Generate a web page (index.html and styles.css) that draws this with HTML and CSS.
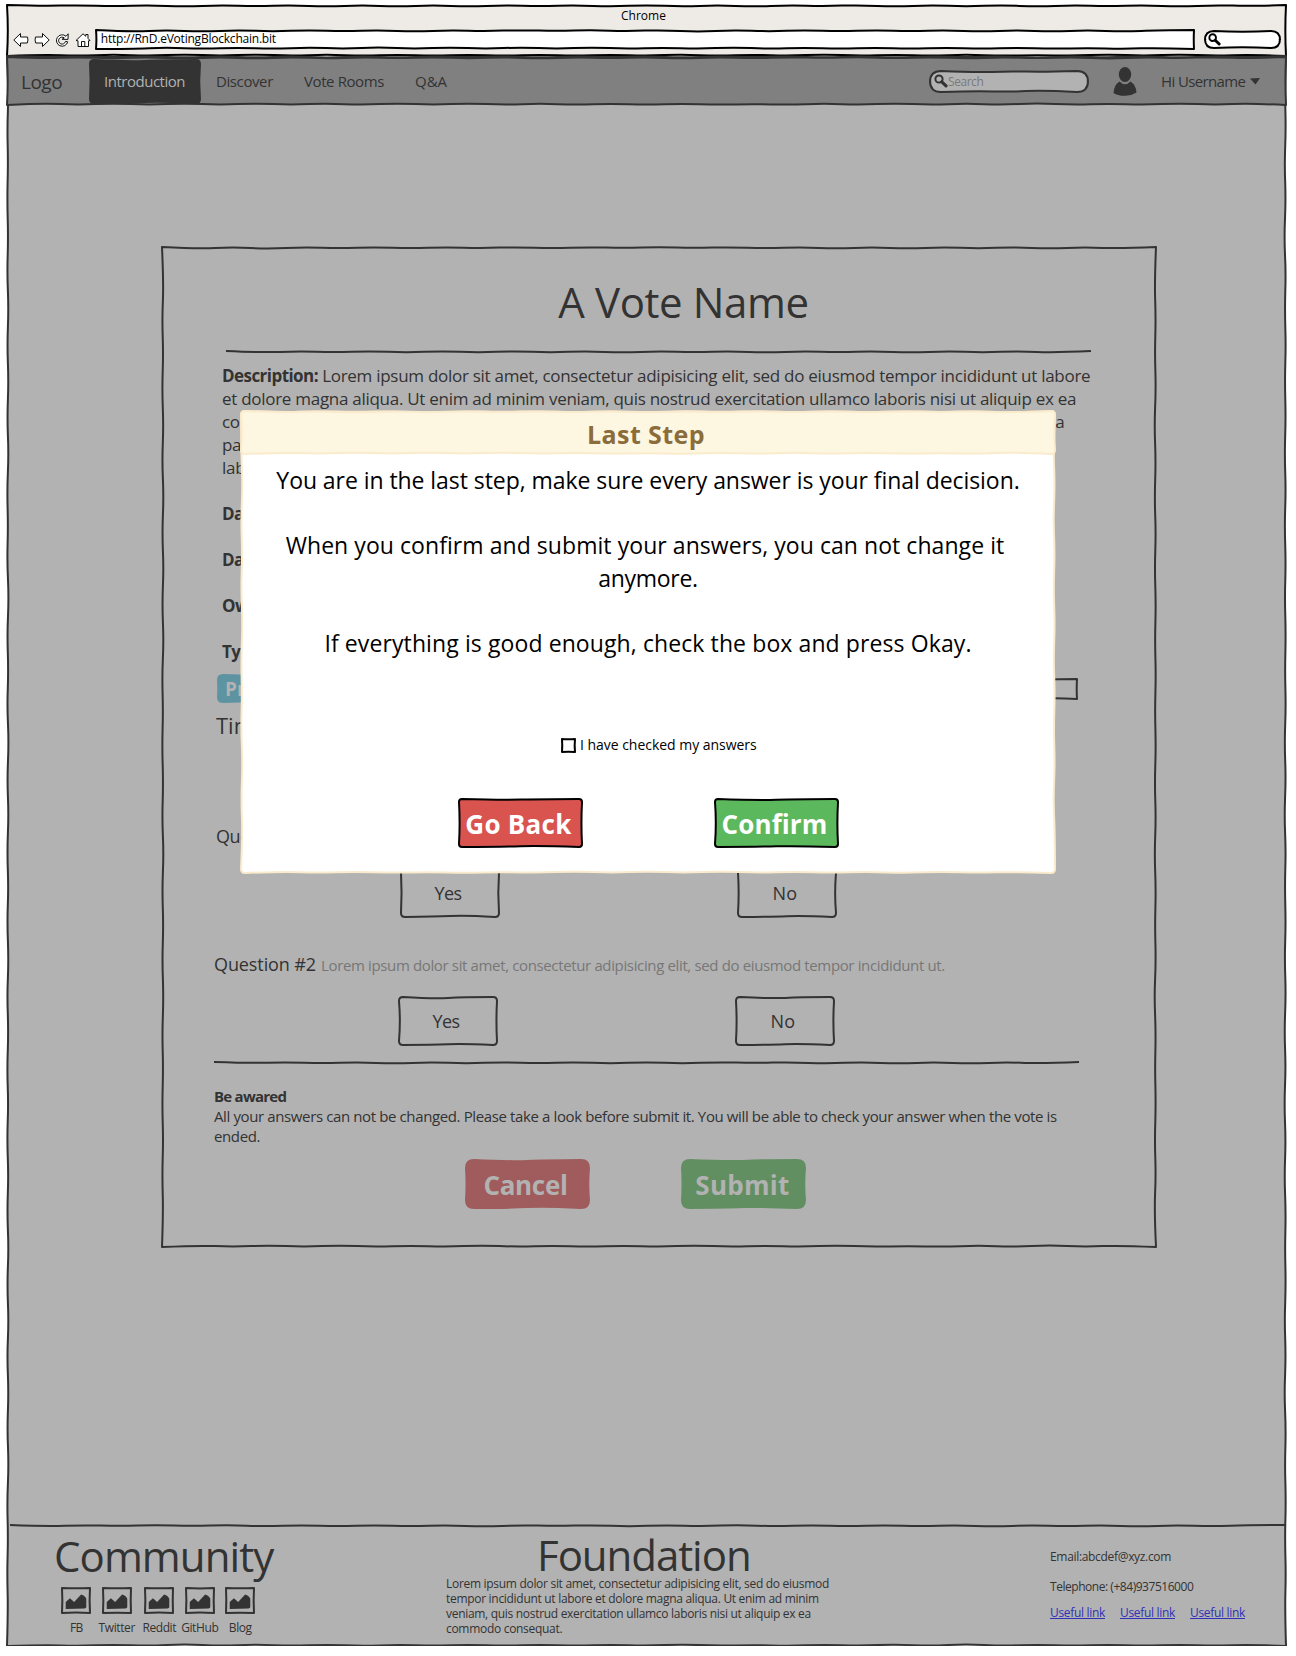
FILE: index.html
```html
<!DOCTYPE html>
<html lang="en">
<head>
<meta charset="utf-8">
<title>Vote - Last Step</title>
<link rel="stylesheet" href="styles.css">
</head>
<body>
<svg class="defs" width="0" height="0" aria-hidden="true">
  <symbol id="lens" viewBox="0 0 14 14"><circle cx="5" cy="5" r="3.6" fill="none" stroke="currentColor" stroke-width="2"/><path d="M7.8 7.8l4.2 4" stroke="currentColor" stroke-width="3.2" stroke-linecap="round"/></symbol>
  <symbol id="picture" viewBox="0 0 30 26"><path d="M4 22V14.5L8.500 10.500 13 14.500 20.500 6.500Q25 8 26 11V20Q26 21.500 24 21.700Z" fill="currentColor"/></symbol>
</svg>
<div class="window">
  <header class="chrome sketch">
    <div class="chrome-title">Chrome</div>
    <div class="toolbar">
      <svg class="tool" viewBox="0 0 16 16"><path d="M.8 8L7.5 1.5V5H14.5Q15.5 8 14.3 11H7.5V14.5Z"/></svg>
      <svg class="tool" viewBox="0 0 16 16"><path d="M15.2 8L8.5 1.5V5H1.5Q.5 8 1.7 11H8.5V14.5Z"/></svg>
      <svg class="tool" viewBox="0 0 16 16"><path d="M12 4.300A5.700 5.700 0 1 0 13.700 9.800L11.500 9.400A3.500 3.500 0 1 1 10.300 5.900L8 7.300 14 7.400 14.200 1.800Z"/></svg>
      <svg class="tool" viewBox="0 0 16 16"><path d="M1 8.500L8 1.800 10.800 4.300V2.500H13V6.400L15 8.500 13.500 8.800V14.500H3V8.800Z"/><path d="M6.500 14V9.500H9.800V14"/></svg>
      <div class="url sketch">http://RnD.eVotingBlockchain.bit</div>
      <div class="mini-search sketch" data-radius="9"><svg class="lens"><use href="#lens"/></svg></div>
    </div>
  </header>

  <div class="page sketch">
    <nav class="navbar sketch">
      <span class="logo">Logo</span>
      <a class="tab active sketch" data-radius="4">Introduction</a>
      <a class="tab discover">Discover</a>
      <a class="tab rooms">Vote Rooms</a>
      <a class="tab qa">Q&amp;A</a>
      <div class="search sketch" data-radius="11"><svg class="lens"><use href="#lens"/></svg><span>Search</span></div>
      <svg class="user" viewBox="0 0 24 29"><ellipse cx="12" cy="7.500" rx="6.200" ry="7.500"/><path d="M6.500 14.500Q12 20 17.500 14.500Q23 18 23.500 25.500Q18 29 12 28.800Q5 29 .5 26Q1 18 6.500 14.500Z"/></svg>
      <span class="hello">Hi Username</span>
      <svg class="caret" viewBox="0 0 10 7"><path d="M0 .5L10 0 5.500 6.500Z"/></svg>
    </nav>

    <main class="content">
      <section class="card sketch">
        <h1 class="vote-name">A Vote Name</h1>
        <div class="rule sketch-line"></div>
        <p class="description"><b>Description:</b><span class="lead"> Lorem ipsum dolor sit amet, consectetur adipisicing elit, sed do eiusmod tempor incididunt ut labore</span><br>et dolore magna aliqua. Ut enim ad minim veniam, quis nostrud exercitation ullamco laboris nisi ut aliquip ex ea<br><span class="duis">commodo consequat. Duis aute irure dolor in reprehenderit in voluptate velit esse cillum dolore eu fugiat nulla</span><br><span class="tight">pariatur. Excepteur sint occaecat cupidatat non proident, sunt in culpa qui officia deserunt mollit anim id est</span><br>laborum.<br><br><b>Date start:</b><br><br><b>Date end:</b><br><br><b>Owner:</b><br><br><b>Type:</b></p>
        <div class="progress-row">
          <span class="badge sketch" data-radius="5">Progress</span>
          <div class="progress sketch"></div>
        </div>
        <div class="time-left">Time left:</div>
        <div class="question first"><span class="label">Question #1</span></div>
        <div class="answers upper"><span class="answer sketch" data-radius="4">Yes</span><span class="answer no sketch" data-radius="4">No</span></div>
        <div class="question"><span class="label">Question #2</span><span class="hint">Lorem ipsum dolor sit amet, consectetur adipisicing elit, sed do eiusmod tempor incididunt ut.</span></div>
        <div class="answers lower"><span class="answer sketch" data-radius="4">Yes</span><span class="answer no sketch" data-radius="4">No</span></div>
        <div class="rule bottom sketch-line"></div>
        <p class="notice"><b>Be awared</b><br>All your answers can not be changed. Please take a look before submit it. You will be able to check your answer when the vote is<br>ended.</p>
        <div class="actions">
          <span class="button cancel sketch" data-radius="8">Cancel</span>
          <span class="button submit sketch" data-radius="8">Submit</span>
        </div>
      </section>
    </main>

    <footer class="footer">
      <div class="rule sketch-line"></div>
      <div class="footer-body">
        <section class="community">
          <h2>Community</h2>
          <div class="socials">
            <div class="social"><span class="thumb sketch"><svg><use href="#picture"/></svg></span><span>FB</span></div>
            <div class="social"><span class="thumb sketch"><svg><use href="#picture"/></svg></span><span>Twitter</span></div>
            <div class="social"><span class="thumb sketch"><svg><use href="#picture"/></svg></span><span>Reddit</span></div>
            <div class="social"><span class="thumb sketch"><svg><use href="#picture"/></svg></span><span>GitHub</span></div>
            <div class="social"><span class="thumb sketch"><svg><use href="#picture"/></svg></span><span>Blog</span></div>
          </div>
        </section>
        <section class="foundation">
          <h2>Foundation</h2>
          <p>Lorem ipsum dolor sit amet, consectetur adipisicing elit, sed do eiusmod<br>tempor incididunt ut labore et dolore magna aliqua. Ut enim ad minim<br>veniam, quis nostrud exercitation ullamco laboris nisi ut aliquip ex ea<br>commodo consequat.</p>
        </section>
        <address class="contact">
          <div class="email">Email:abcdef@xyz.com</div>
          <div class="phone">Telephone: (+84)937516000</div>
          <div class="links"><a>Useful link</a><a>Useful link</a><a>Useful link</a></div>
        </address>
      </div>
    </footer>
  </div>
</div>

<div class="modal sketch" data-radius="4" role="dialog">
  <div class="modal-title sketch" data-radius="4">Last Step</div>
  <div class="modal-body">
    <p class="m1">You are in the last step, make sure every answer is your final decision.</p>
    <p class="m2">When you confirm and submit your answers, you can not change it<br><span class="wrap">anymore.</span></p>
    <p class="m3">If everything is good enough, check the box and press Okay.</p>
  </div>
  <div class="confirm-check"><span class="box sketch"></span><span>I have checked my answers</span></div>
  <div class="modal-actions">
    <span class="button back sketch" data-radius="3">Go Back</span>
    <span class="button confirm sketch" data-radius="3">Confirm</span>
  </div>
</div>
<script src="sketch.js"></script>
</body>
</html>
```

FILE: styles.css
```css
* { box-sizing: border-box; }
body { margin: 0; background: #fff; color: #333; font-family: "Open Sans", "Noto Sans", sans-serif; }
h1, h2, p { margin: 0; font-weight: 400; }
a, span, p, h1, h2 { white-space: nowrap; }
.defs { position: absolute; }
.sketch, .sketch-line { position: relative; isolation: isolate; --line: #333; --fill: none; }
.outline { position: absolute; left: 0; top: 0; width: 100%; height: 100%; overflow: visible; z-index: -1; }
.outline path { stroke: var(--line); fill: var(--fill); stroke-width: 2; stroke-linejoin: round; }

.window { width: 1279px; height: 1641px; margin: 5px 0 0 7px; display: flex; flex-direction: column; box-shadow: 0 4px 1px -1px #c8c8c8; }
.chrome { height: 51px; --line: #000; --fill: #eeeae6; color: #000; flex: none; }
.chrome-title { height: 24px; padding-right: 6px; text-align: center; font-size: 12px; line-height: 21px; }
.toolbar { display: flex; align-items: center; height: 21px; padding-left: 6px; }
.tool { width: 16px; height: 16px; margin-right: 4.700px; fill: #fff; stroke: #111; stroke-width: 1; stroke-linejoin: round; flex: none; }
.url { width: 1098px; height: 19px; padding-left: 5px; --line: #000; --fill: #fff; font-size: 12px; line-height: 17px; letter-spacing: -.22px; }
.mini-search { width: 75px; height: 17px; margin-left: 11px; padding: 2px 0 0 3px; --line: #000; --fill: #fff; display: flex; }
.mini-search .lens { width: 13px; height: 13px; }

.page { flex: 1; display: flex; flex-direction: column; --fill: #b2b2b2; }
.navbar { height: 48px; margin-top: 1px; display: flex; align-items: center; --fill: #808080; font-size: 15px; flex: none; }
.logo { font-size: 19px; width: 83px; padding: 1px 0 0 14px; letter-spacing: -.5px; }
.tab { line-height: 46px; letter-spacing: -.4px; }
.tab.active { --fill: #333; color: #b2b2b2; width: 110px; height: 43px; padding-left: 14px; line-height: 42px; letter-spacing: -.48px; }
.discover { margin-left: 16px; width: 88px; }
.rooms { width: 111px; }
.qa { width: 515px; letter-spacing: 0; }
.search { width: 158px; height: 21px; --fill: #b2b2b2; color: #7a7a7a; font-size: 12px; line-height: 19px; display: flex; align-items: center; padding-left: 4px; letter-spacing: -.45px; }
.search .lens { width: 14px; height: 14px; color: #333; }
.user { width: 24px; height: 29px; margin-left: 25px; fill: #333; }
.hello { margin-left: 24px; width: 89px; letter-spacing: -.62px; }
.caret { width: 10px; height: 7px; fill: #333; }

.content { flex: 1; padding: 142px 0 0 155px; }
.card { width: 994px; height: 1000px; padding-top: 25px; }
.vote-name { font-size: 42px; line-height: 60px; text-align: center; padding-left: 49px; letter-spacing: -.4px; }
.rule { height: 2px; }
.card .rule { width: 865px; margin: 18px 0 0 64px; }
.description { margin: 12px 0 0 60px; font-size: 17px; line-height: 23px; letter-spacing: -.28px; }
.description b { letter-spacing: -.55px; }
.description .lead { letter-spacing: -.28px; }
.description .duis { letter-spacing: -.3px; }
.description .tight { letter-spacing: -.5px; }
.progress-row { display: flex; margin: 12px 0 0 56px; align-items: center; }
.badge { width: 86px; height: 27px; --fill: #5e93a2; --line: #5e93a2; color: #b2b2b2; font-weight: 700; font-size: 19px; line-height: 28px; padding-left: 7px; }
.progress { width: 761px; height: 20px; margin-left: 12px; }
.time-left { font-size: 22px; line-height: 30px; margin: 8px 0 0 54px; }
.question { display: flex; align-items: baseline; line-height: 26px; margin: 34px 0 0 52px; }
.question.first { margin: 83px 0 0 54px; }
.label { font-size: 18px; width: 107px; letter-spacing: -.1px; }
.first .label { letter-spacing: -.4px; }
.hint { font-size: 15px; color: #777; letter-spacing: -.36px; }
.answers { display: flex; gap: 239px; }
.answers.upper { margin: 20px 0 0 239px; }
.answers.lower { margin: 19px 0 0 237px; }
.answer { width: 98px; height: 48px; font-size: 18px; line-height: 49px; text-align: center; padding-right: 4px; letter-spacing: -.6px; }
.answer.no { letter-spacing: .3px; }
.card .rule.bottom { margin: 16px 0 0 52px; }
.notice { font-size: 15px; line-height: 20px; margin: 23px 0 0 52px; letter-spacing: -.38px; }
.notice b { letter-spacing: -.75px; }
.actions { display: flex; gap: 93px; margin: 14px 0 0 304px; }
.button { width: 123px; height: 48px; font-size: 26px; font-weight: 700; line-height: 50px; text-align: center; padding-right: 4px; }
.cancel { --fill: #a05c5c; --line: #a05c5c; color: #b2b2b2; letter-spacing: -.3px; }
.submit { --fill: #628f62; --line: #628f62; color: #b2b2b2; letter-spacing: .3px; padding-right: 2px; }

.footer { height: 122px; }
.footer .rule { width: 1275px; margin-left: 3px; }
.footer-body { display: flex; }
.community { width: 439px; padding-left: 47px; }
h2 { font-size: 42px; line-height: 60px; letter-spacing: -.92px; }
.socials { display: flex; padding: 2px 0 0 2px; }
.social { width: 40.500px; display: flex; flex-direction: column; align-items: center; font-size: 12px; line-height: 18px; letter-spacing: -.4px; }
.social:nth-child(3) { margin-left: 2px; }
.social:first-child { letter-spacing: -.8px; }
.thumb { width: 28px; height: 25px; margin-bottom: 6px; }
.thumb svg:not(.outline) { display: block; width: 28px; height: 25px; }
.foundation { width: 604px; }
.foundation h2 { padding-left: 91px; height: 50px; line-height: 57px; letter-spacing: -1.050px; }
.foundation p { font-size: 12px; line-height: 15px; letter-spacing: -.3px; }
.contact { font-style: normal; font-size: 12px; line-height: 16px; padding-top: 23px; letter-spacing: -.32px; }
.phone { margin-top: 14px; letter-spacing: -.46px; }
.links { display: flex; gap: 15px; margin-top: 10px; color: #3030b8; }
.links a { width: 55px; text-decoration: underline; }

.modal { position: absolute; left: 241px; top: 411px; width: 814px; height: 462px; color: #000; --fill: #fff; --line: #faebcc; }
.modal-title { height: 43px; --fill: #fdf7e2; --line: #faebcc; color: #8a6d3b; font-weight: 700; font-size: 25px; line-height: 46px; text-align: center; padding-right: 4px; letter-spacing: .4px; }
.modal-body { font-size: 23px; line-height: 33px; text-align: center; padding-top: 10px; }
.m1 { letter-spacing: -.06px; }
.m2, .m3 { margin-top: 32px; letter-spacing: .06px; }
.m3 { letter-spacing: .1px; }
.m2 { padding-right: 6px; }
.m2 .wrap { padding-left: 6px; letter-spacing: -.3px; }
.confirm-check { display: flex; align-items: center; margin: 75px 0 0 321px; font-size: 14px; line-height: 20px; letter-spacing: -.03px; }
.box { width: 13px; height: 13px; margin-right: 5px; --line: #000; }
.modal-actions { display: flex; gap: 133px; margin: 44px 0 0 218px; color: #fff; }
.back { --fill: #d9534f; --line: #000; letter-spacing: .3px; }
.confirm { --fill: #5cb85c; --line: #000; letter-spacing: .1px; }
```

FILE: sketch.js
```js
// Draws hand-drawn outlines behind .sketch boxes and along .sketch-line rules.
const NS = "http://www.w3.org/2000/svg";
let seed = 7;
const rand = () => (seed = (seed * 16807) % 2147483647) / 2147483647;

function side(x0, y0, x1, y1, nx, ny) {
  const len = Math.hypot(x1 - x0, y1 - y0);
  const n = Math.max(2, Math.round(len / 36));
  const amp = len < 30 ? 0.7 : 1.5;
  const pts = [];
  for (let i = 1; i < n; i++) {
    const t = i / n, d = (i % 2 ? 1 : 0.1) * amp * (0.7 + rand() * 0.5);
    pts.push([x0 + (x1 - x0) * t + nx * d, y0 + (y1 - y0) * t + ny * d]);
  }
  pts.push([x1, y1]);
  let out = "";
  for (let i = 0; i < pts.length - 1; i++) {
    const a = pts[i], b = pts[i + 1], last = i === pts.length - 2;
    const e = last ? b : [(a[0] + b[0]) / 2, (a[1] + b[1]) / 2];
    out += `Q${a[0].toFixed(1)} ${a[1].toFixed(1)} ${e[0].toFixed(1)} ${e[1].toFixed(1)}`;
  }
  return out;
}

function attach(el, d) {
  const svg = document.createElementNS(NS, "svg");
  svg.setAttribute("class", "outline");
  const path = document.createElementNS(NS, "path");
  path.setAttribute("d", d);
  svg.appendChild(path);
  el.prepend(svg);
}

document.querySelectorAll(".sketch").forEach(el => {
  const w = el.offsetWidth, h = el.offsetHeight, r = +(el.dataset.radius || 0);
  attach(el, `M${r} 0` + side(r, 0, w - r, 0, 0, 1) + `Q${w} 0 ${w} ${r}` +
    side(w, r, w, h - r, -1, 0) + `Q${w} ${h} ${w - r} ${h}` +
    side(w - r, h, r, h, 0, -1) + `Q0 ${h} 0 ${h - r}` +
    side(0, h - r, 0, r, 1, 0) + `Q0 0 ${r} 0Z`);
});
document.querySelectorAll(".sketch-line").forEach(el => {
  attach(el, "M0 1" + side(0, 1, el.offsetWidth, 1, 0, 1));
});
```
